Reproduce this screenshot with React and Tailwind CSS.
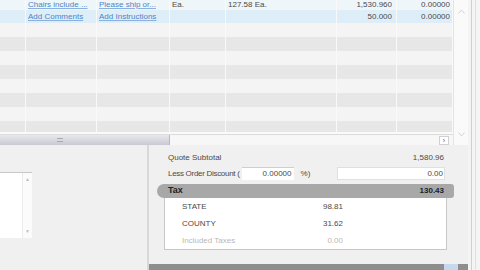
import React from 'react';

const cols = ['w-[26px]', 'w-[71px]', 'w-[73px]', 'w-[56px]', 'w-[111px]', 'w-[60px]', 'w-[56px]'];

const Cell = ({ w, children, right, pad }) => (
    <div className={`${w} h-full flex items-center border-r border-[#f9f9f9] overflow-hidden whitespace-nowrap ${right ? 'justify-end' : ''} ${pad || 'px-[2px]'}`}>
        {children}
    </div>
);

const Link = ({ children }) => (
    <span className="text-[#4a84c8] underline decoration-[#8ab0dc]">{children}</span>
);

const GridRow = ({ bg, h, cells }) => (
    <div className={`flex ${h} ${bg}`}>
        {cols.map((w, i) => (
            <Cell key={i} w={w} right={i >= 5} pad={i === 5 ? 'pr-[4px]' : i === 6 ? 'pr-[2px]' : 'px-[2px]'}>
                {cells ? cells[i] : null}
            </Cell>
        ))}
    </div>
);

const App = () => {
    const stripes = ['bg-[#f4f4f4]', 'bg-[#e7e7e7]', 'bg-[#f4f4f4]', 'bg-[#e7e7e7]', 'bg-[#f4f4f4]', 'bg-[#e7e7e7]', 'bg-[#f4f4f4]'];

    return (
        <div className="w-[480px] h-[270px] flex bg-[#f0f0f0] overflow-hidden text-[8px] text-[#4a4a4a]" style={{ fontFamily: '"Liberation Sans", Arial, sans-serif' }}>
            <div className="w-[468px] flex flex-col">
                {/* Grid */}
                <div className="h-[145px] flex">
                    <div className="w-[453px] flex flex-col">
                        <GridRow bg="bg-[#eff6fa]" h="h-[10px]" cells={[null, <Link>Chairs include ...</Link>, <Link>Please ship or...</Link>, 'Ea.', '127.58 Ea.', '1,530.960', '0.00000']} />
                        <GridRow bg="bg-[#ddeef9]" h="h-[13px]" cells={[null, <Link>Add Comments</Link>, <Link>Add Instructions</Link>, null, null, '50.000', '0.00000']} />
                        {stripes.map((bg, i) => (
                            <GridRow key={i} bg={bg} h="h-[14px]" />
                        ))}
                        <div className="h-[11px] bg-[#e7e7e7] flex">
                            {cols.map((w, i) => (
                                <div key={i} className={`${w} h-full border-r border-[#f9f9f9]`} />
                            ))}
                        </div>
                        {/* Horizontal scrollbar */}
                        <div className="flex-1 flex flex-col">
                            <div className="h-[2px] bg-[#fafafa]" />
                            <div className="flex-1 flex border-t border-[#dcdcdc] bg-[#f7f7f7]">
                                <div className="w-[170px] bg-gradient-to-b from-[#e8e8ee] to-[#c9c9d3] border-r border-[#b8b8c4] flex items-center pl-[57px]">
                                    <div className="w-[6px] h-[4px] border-y border-[#a8a8b4]" />
                                </div>
                                <div className="flex-1 flex items-center justify-end pr-[4px]">
                                    <div className="w-[10px] h-[9px] border border-[#d0d0d0] bg-white flex items-center justify-center text-[7px] text-[#555] leading-none">›</div>
                                </div>
                            </div>
                        </div>
                    </div>
                    {/* Vertical scrollbar */}
                    <div className="w-[15px] bg-[#fafafa] border-l border-[#e4e4e4] flex flex-col items-center justify-between pt-[9px] pb-[8px]">
                        <svg width="7" height="5" viewBox="0 0 7 5"><path d="M0.5 4.5 L3.5 1 L6.5 4.5" fill="none" stroke="#d4d4d4" /></svg>
                        <svg width="7" height="5" viewBox="0 0 7 5"><path d="M0.5 0.5 L3.5 4 L6.5 0.5" fill="none" stroke="#d4d4d4" /></svg>
                    </div>
                </div>

                {/* Bottom */}
                <div className="flex-1 flex">
                    <div className="w-[149px] border-r-2 border-[#d8d8d8] flex flex-col pt-[27px]">
                        <div className="w-[32px] h-[66px] bg-white border-t border-[#c8c8c8] flex justify-end">
                            <div className="w-[10px] h-full border-l border-[#ececec] bg-[#fbfbfb] flex flex-col items-center justify-between py-[4px] text-[5px] text-[#c0c0c0] leading-none">
                                <span>▲</span>
                                <span>▼</span>
                            </div>
                        </div>
                    </div>
                    <div className="flex-1 flex flex-col pt-[5px]">
                        <div className="h-[15px] flex items-center justify-between pl-[19px] pr-[24px]">
                            <span>Quote Subtotal</span>
                            <span>1,580.96</span>
                        </div>
                        <div className="h-[17px] flex items-center pl-[19px] pr-[23px]">
                            <span className="shrink-0 whitespace-nowrap tracking-[-0.3px]">Less Order Discount (</span>
                            <div className="ml-[2px] w-[52px] shrink-0 h-[13px] bg-white border-t border-[#cfcfcf] flex items-center justify-end pr-[2px]">0.00000</div>
                            <span className="ml-[7px] w-[36px] shrink-0">%)</span>
                            <div className="flex-1 h-[13px] bg-white border border-[#e0e0e0] flex items-center justify-end pr-[1px]">0.00</div>
                        </div>
                        <div className="mt-[2px] ml-[8px] mr-[14px] h-[14px] bg-[#a8a8a8] rounded-l-[7px] rounded-r-[3px] flex items-center justify-between pl-[11px] pr-[10px] font-bold text-[#222]">
                            <span className="text-[9px]">Tax</span>
                            <span>130.43</span>
                        </div>
                        <div className="ml-[15px] mr-[21px] h-[52px] bg-white border border-t-0 border-[#c8c8c8] flex flex-col justify-center gap-[7px] pl-[17px]">
                            {[
                                ['STATE', '98.81', ''],
                                ['COUNTY', '31.62', ''],
                                ['Included Taxes', '0.00', 'text-[#b8b8b8]'],
                            ].map(([l, v, c]) => (
                                <div key={l} className={`flex h-[10px] items-center ${c}`}>
                                    <span className="w-[120px]">{l}</span>
                                    <span className="w-[41px] text-right">{v}</span>
                                </div>
                            ))}
                        </div>
                        <div className="flex-1" />
                        <div className="h-[6px] bg-[#8e8e8e] flex justify-end pr-[10px]">
                            <div className="w-[14px] h-full bg-[#c8d8ec]" />
                        </div>
                    </div>
                </div>
            </div>
            {/* Right border */}
            <div className="w-[12px] bg-[#f4f4f4] flex">
                <div className="w-[4px] border-r border-[#cfcfcf]" />
                <div className="w-[4px] border-r border-[#e0e0e0]" />
            </div>
        </div>
    );
};

export default App;
